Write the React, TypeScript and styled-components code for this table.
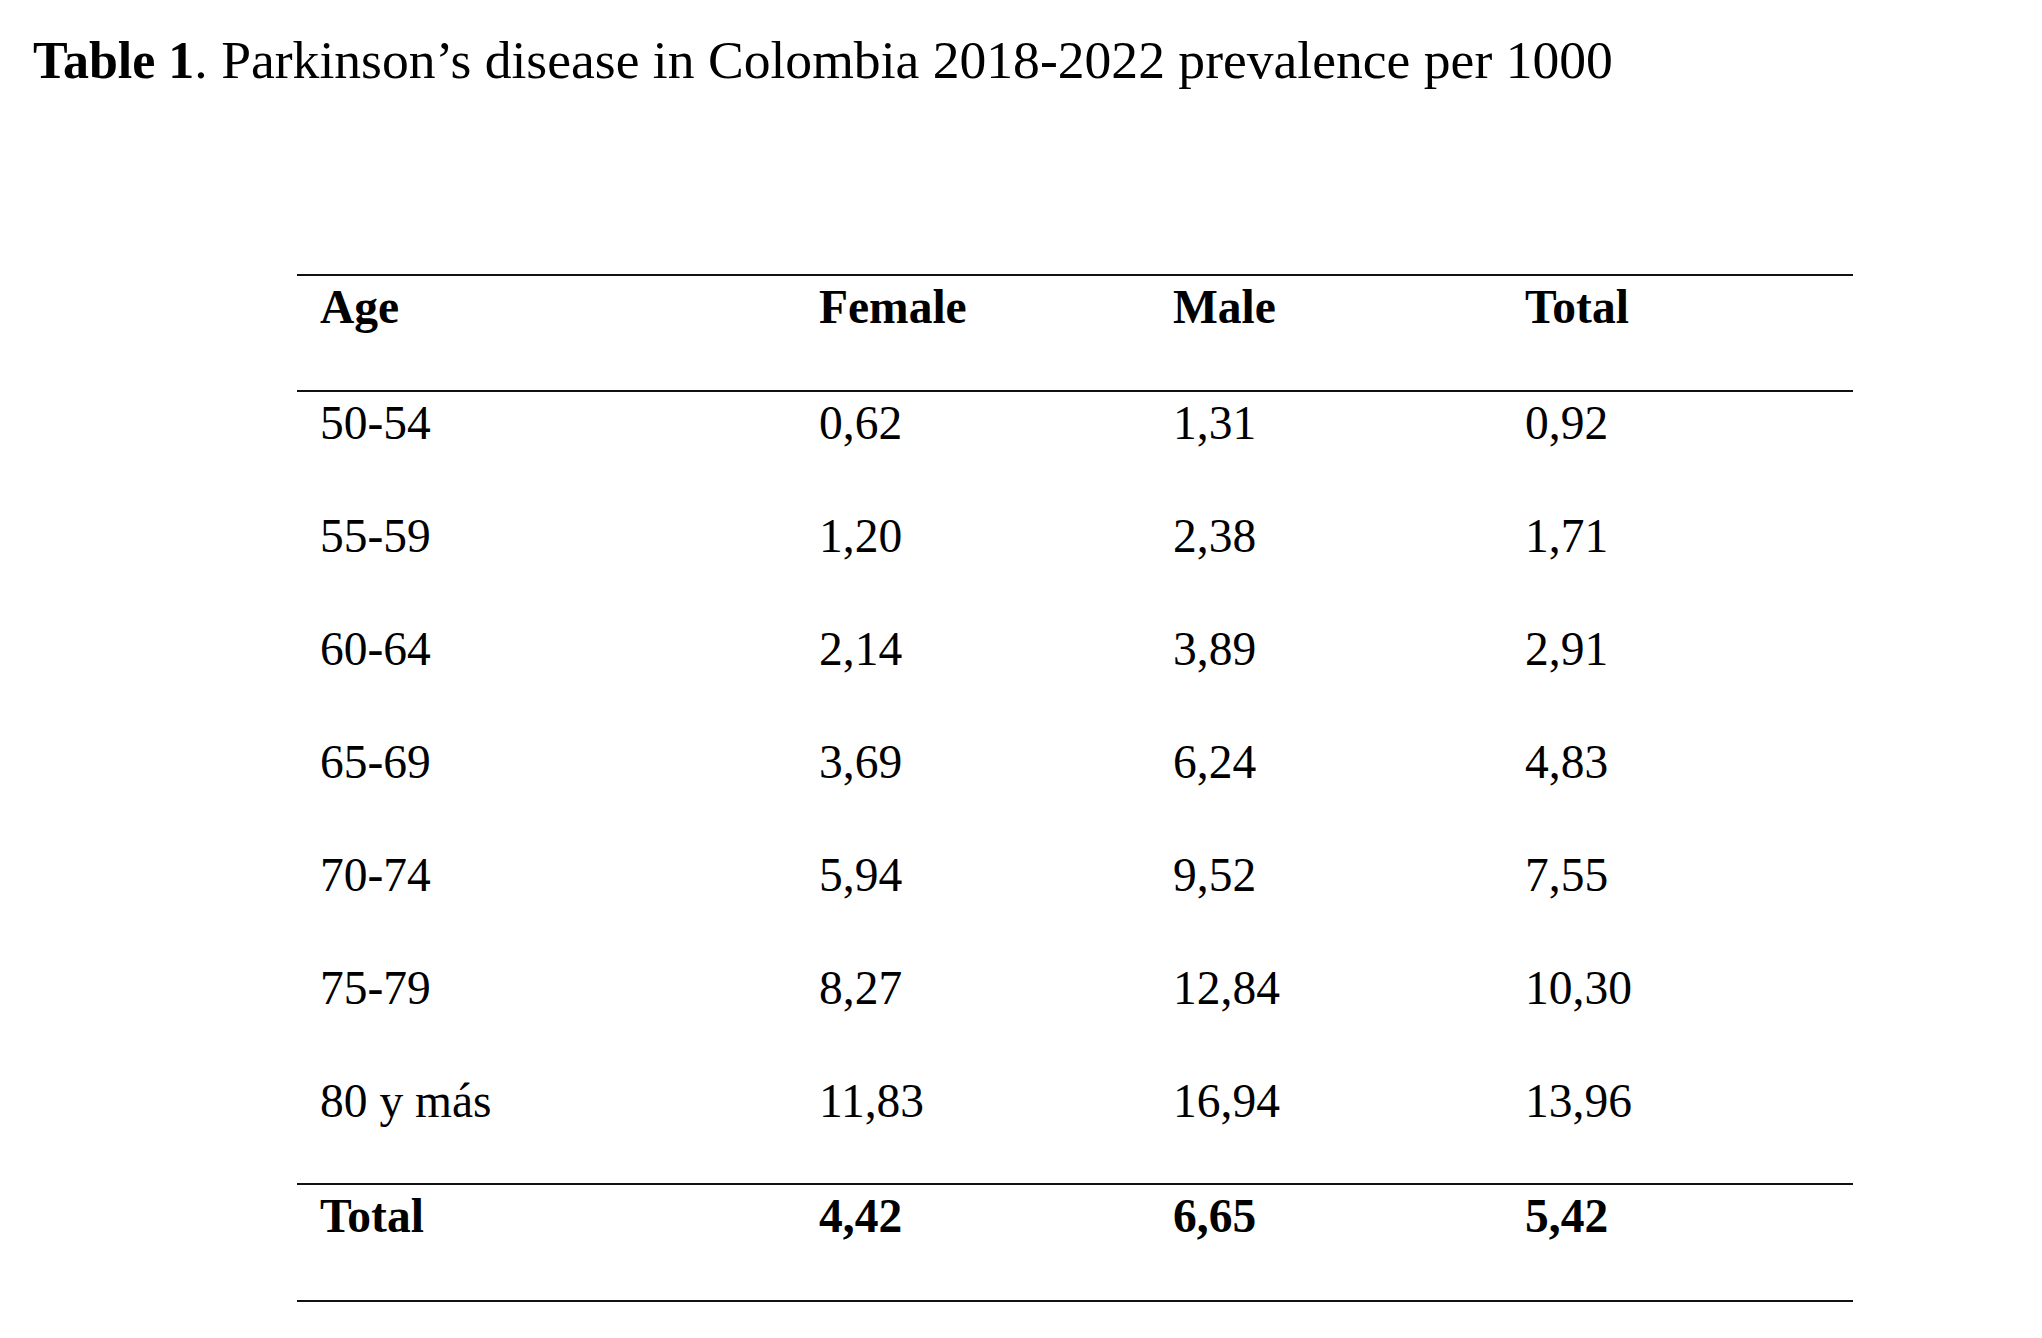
import styled, { createGlobalStyle } from 'styled-components';

const rows = [
  ['50-54', '0,62', '1,31', '0,92'],
  ['55-59', '1,20', '2,38', '1,71'],
  ['60-64', '2,14', '3,89', '2,91'],
  ['65-69', '3,69', '6,24', '4,83'],
  ['70-74', '5,94', '9,52', '7,55'],
  ['75-79', '8,27', '12,84', '10,30'],
  ['80 y más', '11,83', '16,94', '13,96'],
];

const headers = ['Age', 'Female', 'Male', 'Total'];
const totals = ['Total', '4,42', '6,65', '5,42'];

const App = () => {
  return (
    <Page>
      <GlobalStyle />
      <Title>
        <b>Table 1</b>. Parkinson’s disease in Colombia 2018-2022 prevalence per 1000
      </Title>
      <Table>
        <Row $height={114} $bold $bottomRule>
          {headers.map((h) => (
            <Cell key={h}>{h}</Cell>
          ))}
        </Row>
        {rows.map((r, idx) => (
          <Row key={idx} $height={113}>
            {r.map((v, i) => (
              <Cell key={i}>{v}</Cell>
            ))}
          </Row>
        ))}
        <Row $height={115} $bold $topRule>
          {totals.map((v, i) => (
            <Cell key={i}>{v}</Cell>
          ))}
        </Row>
      </Table>
    </Page>
  );
};

export default App;

const GlobalStyle = createGlobalStyle`
  html, body {
    margin: 0;
    padding: 0;
    background: #fff;
  }
  body {
    font-family: 'Liberation Serif', 'Times New Roman', serif;
    color: #000;
  }
`;

const Page = styled.div`
  width: 2042px;
  min-height: 1338px;
  padding-top: 30px;
  box-sizing: border-box;
`;

const Title = styled.h1`
  margin: 0 0 0 33px;
  font-size: 53.6px;
  line-height: 61px;
  font-weight: 400;

  b {
    font-size: 52px;
    font-weight: 700;
  }
`;

const Table = styled.div`
  margin: 183px 0 0 297px;
  width: 1556px;
  border-top: 2px solid #111;
  border-bottom: 2px solid #111;
`;

const Row = styled.div<{ $height: number; $bold?: boolean; $topRule?: boolean; $bottomRule?: boolean }>`
  display: grid;
  grid-template-columns: 499px 354px 352px 351px;
  height: ${(p) => p.$height}px;
  font-weight: ${(p) => (p.$bold ? 700 : 400)};
  border-top: ${(p) => (p.$topRule ? '2px solid #111' : 'none')};
  border-bottom: ${(p) => (p.$bottomRule ? '2px solid #111' : 'none')};
`;

const Cell = styled.div`
  padding: 4px 0 0 23px;
  font-size: 47.5px;
  line-height: 54px;
  white-space: nowrap;
`;
